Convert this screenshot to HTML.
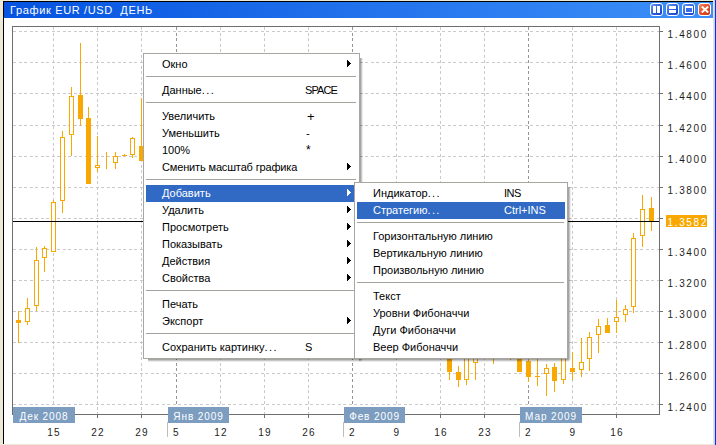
<!DOCTYPE html>
<html><head><meta charset="utf-8"><style>
*{margin:0;padding:0;box-sizing:border-box}
html,body{width:716px;height:445px;overflow:hidden;background:#fff}
body{position:relative;font-family:"Liberation Sans",sans-serif}
.abs{position:absolute}
.pl{position:absolute;left:667.5px;font-size:10px;letter-spacing:1.65px;color:#1e1e1e;line-height:11px}
.dl{position:absolute;font-size:10px;letter-spacing:1.3px;color:#1e1e1e;line-height:11px;white-space:pre}
.dl.c{width:40px;text-align:center}
.mb{position:absolute;top:407px;height:16px;background:#7c9dc0;color:#fff;font-size:10px;letter-spacing:0.9px;line-height:20px;text-align:center;white-space:pre}
.menu{position:absolute;background:#fff;border:1px solid #a7a6a0}
.shadow{position:absolute;background:rgba(0,0,0,0.35)}
.sep{position:absolute;height:1px;background:#a4a39e}
.hl{position:absolute;height:17px;background:#316ac5}
.row{position:absolute;font-size:11px;line-height:17px;height:17px;color:#000;white-space:pre}
.row.hi{color:#fff}
.arr{position:absolute;width:0;height:0;border-top:3.8px solid transparent;border-bottom:3.8px solid transparent;border-left:4.6px solid #000}
.btn{position:absolute;top:3px;width:13px;height:13px;border:1px solid #fff;border-radius:3px;background:linear-gradient(135deg,#6d9bf7 0%,#2f62e0 50%,#1440c8 100%)}
</style></head><body>
<div class="abs" style="left:0;top:0;width:716px;height:445px;background:#ece9d8"></div>
<div class="abs" style="left:3px;top:1px;width:710px;height:443px;background:#000"></div>
<div class="abs" style="left:4px;top:2px;width:709px;height:442px;background:#fff"></div>
<div class="abs" style="left:4px;top:2px;width:709px;height:16px;background:linear-gradient(90deg,#0553e0 0%,#3d90f8 100%)"></div>
<div class="abs" style="left:713px;top:0;width:1px;height:445px;background:#e6e3d3"></div>
<div class="abs" style="left:714px;top:0;width:1px;height:445px;background:#c8d0f8"></div>
<div class="abs" style="left:715px;top:0;width:1px;height:445px;background:#0c2ef0"></div>
<div class="abs" style="left:10px;top:2px;font-size:11px;line-height:16px;letter-spacing:0.65px;color:#fff;white-space:pre">График EUR /USD  ДЕНЬ</div>
<div class="btn" style="left:650px"><div class="abs" style="left:2px;top:2px;width:3px;height:7px;background:#fff"></div><div class="abs" style="left:6px;top:2px;width:3px;height:7px;background:#fff"></div></div>
<div class="btn" style="left:666px"><div class="abs" style="left:2px;top:2px;width:7px;height:3px;background:#fff"></div><div class="abs" style="left:2px;top:6px;width:7px;height:3px;background:#fff"></div></div>
<div class="btn" style="left:682px"><div class="abs" style="left:2px;top:2px;width:8px;height:7px;border:1px solid #fff;border-top-width:2px;background:#3a6ee8"></div></div>
<div class="btn" style="left:698px;background:linear-gradient(135deg,#f08a5c 0%,#e2502a 50%,#c83a12 100%)"><svg class="abs" style="left:2px;top:2px" width="8" height="7" viewBox="0 0 8 7"><path d="M0.8 0.5L7.2 6.5M7.2 0.5L0.8 6.5" stroke="#fff" stroke-width="1.9"/></svg></div>
<svg class="abs" style="left:0;top:0" width="716" height="445" viewBox="0 0 716 445" shape-rendering="crispEdges">
<line x1="13" y1="31.5" x2="659" y2="31.5" stroke="#cacaca" stroke-dasharray="3.4 2.1"/>
<line x1="659" y1="31.5" x2="663" y2="31.5" stroke="#707070"/>
<line x1="13" y1="62.5" x2="659" y2="62.5" stroke="#cacaca" stroke-dasharray="3.4 2.1"/>
<line x1="659" y1="62.5" x2="663" y2="62.5" stroke="#707070"/>
<line x1="13" y1="93.5" x2="659" y2="93.5" stroke="#cacaca" stroke-dasharray="3.4 2.1"/>
<line x1="659" y1="93.5" x2="663" y2="93.5" stroke="#707070"/>
<line x1="13" y1="125.5" x2="659" y2="125.5" stroke="#cacaca" stroke-dasharray="3.4 2.1"/>
<line x1="659" y1="125.5" x2="663" y2="125.5" stroke="#707070"/>
<line x1="13" y1="156.5" x2="659" y2="156.5" stroke="#cacaca" stroke-dasharray="3.4 2.1"/>
<line x1="659" y1="156.5" x2="663" y2="156.5" stroke="#707070"/>
<line x1="13" y1="187.5" x2="659" y2="187.5" stroke="#cacaca" stroke-dasharray="3.4 2.1"/>
<line x1="659" y1="187.5" x2="663" y2="187.5" stroke="#707070"/>
<line x1="13" y1="218.5" x2="659" y2="218.5" stroke="#cacaca" stroke-dasharray="3.4 2.1"/>
<line x1="659" y1="218.5" x2="663" y2="218.5" stroke="#707070"/>
<line x1="13" y1="249.5" x2="659" y2="249.5" stroke="#cacaca" stroke-dasharray="3.4 2.1"/>
<line x1="659" y1="249.5" x2="663" y2="249.5" stroke="#707070"/>
<line x1="13" y1="280.5" x2="659" y2="280.5" stroke="#cacaca" stroke-dasharray="3.4 2.1"/>
<line x1="659" y1="280.5" x2="663" y2="280.5" stroke="#707070"/>
<line x1="13" y1="311.5" x2="659" y2="311.5" stroke="#cacaca" stroke-dasharray="3.4 2.1"/>
<line x1="659" y1="311.5" x2="663" y2="311.5" stroke="#707070"/>
<line x1="13" y1="342.5" x2="659" y2="342.5" stroke="#cacaca" stroke-dasharray="3.4 2.1"/>
<line x1="659" y1="342.5" x2="663" y2="342.5" stroke="#707070"/>
<line x1="13" y1="373.5" x2="659" y2="373.5" stroke="#cacaca" stroke-dasharray="3.4 2.1"/>
<line x1="659" y1="373.5" x2="663" y2="373.5" stroke="#707070"/>
<line x1="13" y1="404.5" x2="659" y2="404.5" stroke="#cacaca" stroke-dasharray="3.4 2.1"/>
<line x1="659" y1="404.5" x2="663" y2="404.5" stroke="#707070"/>
<line x1="53.5" y1="27" x2="53.5" y2="414" stroke="#cacaca" stroke-dasharray="3.4 2.1"/>
<line x1="53.5" y1="414" x2="53.5" y2="418" stroke="#707070"/>
<line x1="97.5" y1="27" x2="97.5" y2="414" stroke="#cacaca" stroke-dasharray="3.4 2.1"/>
<line x1="97.5" y1="414" x2="97.5" y2="418" stroke="#707070"/>
<line x1="141.5" y1="27" x2="141.5" y2="414" stroke="#cacaca" stroke-dasharray="3.4 2.1"/>
<line x1="141.5" y1="414" x2="141.5" y2="418" stroke="#707070"/>
<line x1="176.5" y1="27" x2="176.5" y2="414" stroke="#959595" stroke-dasharray="3.4 2.1"/>
<line x1="176.5" y1="414" x2="176.5" y2="418" stroke="#707070"/>
<line x1="220.5" y1="27" x2="220.5" y2="414" stroke="#cacaca" stroke-dasharray="3.4 2.1"/>
<line x1="220.5" y1="414" x2="220.5" y2="418" stroke="#707070"/>
<line x1="264.5" y1="27" x2="264.5" y2="414" stroke="#cacaca" stroke-dasharray="3.4 2.1"/>
<line x1="264.5" y1="414" x2="264.5" y2="418" stroke="#707070"/>
<line x1="308.5" y1="27" x2="308.5" y2="414" stroke="#cacaca" stroke-dasharray="3.4 2.1"/>
<line x1="308.5" y1="414" x2="308.5" y2="418" stroke="#707070"/>
<line x1="352.5" y1="27" x2="352.5" y2="414" stroke="#959595" stroke-dasharray="3.4 2.1"/>
<line x1="352.5" y1="414" x2="352.5" y2="418" stroke="#707070"/>
<line x1="396.5" y1="27" x2="396.5" y2="414" stroke="#cacaca" stroke-dasharray="3.4 2.1"/>
<line x1="396.5" y1="414" x2="396.5" y2="418" stroke="#707070"/>
<line x1="440.5" y1="27" x2="440.5" y2="414" stroke="#cacaca" stroke-dasharray="3.4 2.1"/>
<line x1="440.5" y1="414" x2="440.5" y2="418" stroke="#707070"/>
<line x1="484.5" y1="27" x2="484.5" y2="414" stroke="#cacaca" stroke-dasharray="3.4 2.1"/>
<line x1="484.5" y1="414" x2="484.5" y2="418" stroke="#707070"/>
<line x1="528.5" y1="27" x2="528.5" y2="414" stroke="#959595" stroke-dasharray="3.4 2.1"/>
<line x1="528.5" y1="414" x2="528.5" y2="418" stroke="#707070"/>
<line x1="572.5" y1="27" x2="572.5" y2="414" stroke="#cacaca" stroke-dasharray="3.4 2.1"/>
<line x1="572.5" y1="414" x2="572.5" y2="418" stroke="#707070"/>
<line x1="616.5" y1="27" x2="616.5" y2="414" stroke="#cacaca" stroke-dasharray="3.4 2.1"/>
<line x1="616.5" y1="414" x2="616.5" y2="418" stroke="#707070"/>
<rect x="18" y="311" width="1" height="32" fill="#f8a800"/>
<rect x="16" y="320" width="5" height="3" fill="#f8a800"/>
<rect x="27" y="298" width="1" height="27" fill="#f8a800"/>
<rect x="25.5" y="308.5" width="4" height="13" fill="#fff" stroke="#f8a800"/>
<rect x="36" y="247" width="1" height="64" fill="#f8a800"/>
<rect x="34.5" y="260.5" width="4" height="45" fill="#fff" stroke="#f8a800"/>
<rect x="44" y="246" width="1" height="26" fill="#f8a800"/>
<rect x="42.5" y="248.5" width="4" height="9" fill="#fff" stroke="#f8a800"/>
<rect x="53" y="200" width="1" height="52" fill="#f8a800"/>
<rect x="51.5" y="202.5" width="4" height="49" fill="#fff" stroke="#f8a800"/>
<rect x="62" y="131" width="1" height="82" fill="#f8a800"/>
<rect x="60.5" y="137.5" width="4" height="63" fill="#fff" stroke="#f8a800"/>
<rect x="71" y="87" width="1" height="69" fill="#f8a800"/>
<rect x="69.5" y="96.5" width="4" height="38" fill="#fff" stroke="#f8a800"/>
<rect x="80" y="43" width="1" height="83" fill="#f8a800"/>
<rect x="78" y="95" width="5" height="24" fill="#f8a800"/>
<rect x="88" y="107" width="1" height="77" fill="#f8a800"/>
<rect x="86" y="118" width="5" height="66" fill="#f8a800"/>
<rect x="97" y="136" width="1" height="36" fill="#f8a800"/>
<rect x="95.5" y="165.5" width="4" height="2" fill="#fff" stroke="#f8a800"/>
<rect x="106" y="152" width="1" height="17" fill="#f8a800"/>
<rect x="115" y="152" width="1" height="17" fill="#f8a800"/>
<rect x="113.5" y="156.5" width="4" height="6" fill="#fff" stroke="#f8a800"/>
<rect x="124" y="154" width="1" height="2" fill="#f8a800"/>
<rect x="122" y="155" width="5" height="1" fill="#f8a800"/>
<rect x="132" y="137" width="1" height="21" fill="#f8a800"/>
<rect x="130.5" y="138.5" width="4" height="16" fill="#fff" stroke="#f8a800"/>
<rect x="141" y="98" width="1" height="63" fill="#f8a800"/>
<rect x="139" y="146" width="5" height="15" fill="#f8a800"/>
<rect x="449" y="340" width="1" height="40" fill="#f8a800"/>
<rect x="447" y="345" width="5" height="27" fill="#f8a800"/>
<rect x="458" y="366" width="1" height="21" fill="#f8a800"/>
<rect x="456" y="372" width="5" height="8" fill="#f8a800"/>
<rect x="466" y="340" width="1" height="45" fill="#f8a800"/>
<rect x="464.5" y="345.5" width="4" height="34" fill="#fff" stroke="#f8a800"/>
<rect x="475" y="340" width="1" height="40" fill="#f8a800"/>
<rect x="473.5" y="345.5" width="4" height="17" fill="#fff" stroke="#f8a800"/>
<rect x="493" y="340" width="1" height="24" fill="#f8a800"/>
<rect x="491" y="345" width="5" height="5" fill="#f8a800"/>
<rect x="510" y="340" width="1" height="20" fill="#f8a800"/>
<rect x="508" y="345" width="5" height="5" fill="#f8a800"/>
<rect x="519" y="340" width="1" height="32" fill="#f8a800"/>
<rect x="517" y="345" width="5" height="27" fill="#f8a800"/>
<rect x="528" y="355" width="1" height="27" fill="#f8a800"/>
<rect x="526" y="361" width="5" height="16" fill="#f8a800"/>
<rect x="537" y="340" width="1" height="46" fill="#f8a800"/>
<rect x="535" y="376" width="5" height="1" fill="#f8a800"/>
<rect x="546" y="364" width="1" height="32" fill="#f8a800"/>
<rect x="544.5" y="368.5" width="4" height="5" fill="#fff" stroke="#f8a800"/>
<rect x="554" y="363" width="1" height="29" fill="#f8a800"/>
<rect x="552" y="367" width="5" height="14" fill="#f8a800"/>
<rect x="563" y="340" width="1" height="44" fill="#f8a800"/>
<rect x="561.5" y="345.5" width="4" height="34" fill="#fff" stroke="#f8a800"/>
<rect x="572" y="352" width="1" height="28" fill="#f8a800"/>
<rect x="570" y="368" width="5" height="4" fill="#f8a800"/>
<rect x="581" y="338" width="1" height="39" fill="#f8a800"/>
<rect x="579.5" y="362.5" width="4" height="7" fill="#fff" stroke="#f8a800"/>
<rect x="589" y="332" width="1" height="39" fill="#f8a800"/>
<rect x="587.5" y="337.5" width="4" height="21" fill="#fff" stroke="#f8a800"/>
<rect x="598" y="319" width="1" height="34" fill="#f8a800"/>
<rect x="596.5" y="326.5" width="4" height="8" fill="#fff" stroke="#f8a800"/>
<rect x="607" y="318" width="1" height="15" fill="#f8a800"/>
<rect x="605" y="325" width="5" height="8" fill="#f8a800"/>
<rect x="616" y="300" width="1" height="33" fill="#f8a800"/>
<rect x="614.5" y="317.5" width="4" height="4" fill="#fff" stroke="#f8a800"/>
<rect x="625" y="305" width="1" height="17" fill="#f8a800"/>
<rect x="623.5" y="309.5" width="4" height="5" fill="#fff" stroke="#f8a800"/>
<rect x="633" y="233" width="1" height="80" fill="#f8a800"/>
<rect x="631.5" y="238.5" width="4" height="68" fill="#fff" stroke="#f8a800"/>
<rect x="642" y="195" width="1" height="52" fill="#f8a800"/>
<rect x="640.5" y="209.5" width="4" height="26" fill="#fff" stroke="#f8a800"/>
<rect x="651" y="197" width="1" height="34" fill="#f8a800"/>
<rect x="649" y="208" width="5" height="13" fill="#f8a800"/>
<rect x="13" y="221" width="646" height="1" fill="#000"/>
<rect x="12.5" y="26.5" width="647" height="388" fill="none" stroke="#6e6e6e"/>
</svg>
<div class="pl" style="top:29px">1.4800</div>
<div class="pl" style="top:60px">1.4600</div>
<div class="pl" style="top:91px">1.4400</div>
<div class="pl" style="top:123px">1.4200</div>
<div class="pl" style="top:154px">1.4000</div>
<div class="pl" style="top:185px">1.3800</div>
<div class="pl" style="top:247px">1.3400</div>
<div class="pl" style="top:278px">1.3200</div>
<div class="pl" style="top:309px">1.3000</div>
<div class="pl" style="top:340px">1.2800</div>
<div class="pl" style="top:371px">1.2600</div>
<div class="pl" style="top:402px">1.2400</div>

<div class="abs" style="left:666px;top:215px;width:41px;height:12px;background:#f8a800"></div>
<div class="pl" style="top:217px;color:#fff">1.3582</div>
<div class="mb" style="left:13px;width:62px">Дек 2008</div>
<div class="mb" style="left:168px;width:61px">Янв 2009</div>
<div style="position:absolute;left:167px;top:422px;width:1px;height:15px;background:#bdbdbd"></div>
<div class="mb" style="left:344px;width:61px">Фев 2009</div>
<div style="position:absolute;left:343px;top:422px;width:1px;height:15px;background:#bdbdbd"></div>
<div class="mb" style="left:520px;width:62px">Мар 2009</div>
<div style="position:absolute;left:519px;top:422px;width:1px;height:15px;background:#bdbdbd"></div>

<div class="dl c" style="left:34px;top:427px">15</div>
<div class="dl c" style="left:78px;top:427px">22</div>
<div class="dl c" style="left:122px;top:427px">29</div>
<div class="dl" style="left:173px;top:427px">5</div>
<div class="dl c" style="left:201px;top:427px">12</div>
<div class="dl c" style="left:245px;top:427px">19</div>
<div class="dl c" style="left:289px;top:427px">26</div>
<div class="dl" style="left:349px;top:427px">2</div>
<div class="dl c" style="left:377px;top:427px">9</div>
<div class="dl c" style="left:421px;top:427px">16</div>
<div class="dl c" style="left:465px;top:427px">23</div>
<div class="dl" style="left:525px;top:427px">2</div>
<div class="dl c" style="left:553px;top:427px">9</div>
<div class="dl c" style="left:597px;top:427px">16</div>

<!-- main menu -->
<div class="abs" style="left:148px;top:359px;width:212px;height:3px;background:linear-gradient(180deg,rgba(0,0,0,.42),rgba(0,0,0,.22) 50%,rgba(0,0,0,0))"></div>
<div class="abs" style="left:360px;top:58px;width:3px;height:301px;background:linear-gradient(90deg,rgba(0,0,0,.42),rgba(0,0,0,.22) 50%,rgba(0,0,0,0))"></div>
<div class="abs" style="left:360px;top:359px;width:3px;height:3px;background:radial-gradient(circle at 0 0,rgba(0,0,0,.4),rgba(0,0,0,0) 3px)"></div>
<div class="menu" style="left:143px;top:53px;width:217px;height:306px"></div>
<div class="row" style="left:162px;top:56px;">Окно</div>
<svg class="abs" style="left:347px;top:60px" width="5" height="7" shape-rendering="crispEdges"><rect x="0" y="0" width="1" height="7" fill="#000"/><rect x="1" y="1" width="1" height="5" fill="#000"/><rect x="2" y="2" width="1" height="3" fill="#000"/><rect x="3" y="3" width="1" height="1" fill="#000"/></svg>
<div class="sep" style="left:146px;top:76px;width:210px"></div>
<div class="row" style="left:162px;top:82px;">Данные<span style="letter-spacing:1.4px">...</span></div>
<div class="row" style="left:305px;top:82px;letter-spacing:-0.9px;">SPACE</div>
<div class="sep" style="left:146px;top:102px;width:210px"></div>
<div class="row" style="left:162px;top:108px;">Увеличить</div>
<div class="row" style="left:306px;top:108px;font-size:13px;margin-left:1px;">+</div>
<div class="row" style="left:162px;top:125px;">Уменьшить</div>
<div class="row" style="left:306px;top:125px;">-</div>
<div class="row" style="left:162px;top:142px;">100%</div>
<div class="row" style="left:306px;top:142px;font-size:12px;">*</div>
<div class="row" style="left:162px;top:159px;letter-spacing:-0.15px;">Сменить масштаб графика</div>
<svg class="abs" style="left:347px;top:163px" width="5" height="7" shape-rendering="crispEdges"><rect x="0" y="0" width="1" height="7" fill="#000"/><rect x="1" y="1" width="1" height="5" fill="#000"/><rect x="2" y="2" width="1" height="3" fill="#000"/><rect x="3" y="3" width="1" height="1" fill="#000"/></svg>
<div class="sep" style="left:146px;top:179px;width:210px"></div>
<div class="hl" style="left:146px;top:185px;width:211px"></div>
<div class="row hi" style="left:162px;top:185px;">Добавить</div>
<svg class="abs" style="left:347px;top:189px" width="5" height="7" shape-rendering="crispEdges"><rect x="0" y="0" width="1" height="7" fill="#fff"/><rect x="1" y="1" width="1" height="5" fill="#fff"/><rect x="2" y="2" width="1" height="3" fill="#fff"/><rect x="3" y="3" width="1" height="1" fill="#fff"/></svg>
<div class="row" style="left:162px;top:202px;">Удалить</div>
<svg class="abs" style="left:347px;top:206px" width="5" height="7" shape-rendering="crispEdges"><rect x="0" y="0" width="1" height="7" fill="#000"/><rect x="1" y="1" width="1" height="5" fill="#000"/><rect x="2" y="2" width="1" height="3" fill="#000"/><rect x="3" y="3" width="1" height="1" fill="#000"/></svg>
<div class="row" style="left:162px;top:219px;">Просмотреть</div>
<svg class="abs" style="left:347px;top:223px" width="5" height="7" shape-rendering="crispEdges"><rect x="0" y="0" width="1" height="7" fill="#000"/><rect x="1" y="1" width="1" height="5" fill="#000"/><rect x="2" y="2" width="1" height="3" fill="#000"/><rect x="3" y="3" width="1" height="1" fill="#000"/></svg>
<div class="row" style="left:162px;top:236px;">Показывать</div>
<svg class="abs" style="left:347px;top:240px" width="5" height="7" shape-rendering="crispEdges"><rect x="0" y="0" width="1" height="7" fill="#000"/><rect x="1" y="1" width="1" height="5" fill="#000"/><rect x="2" y="2" width="1" height="3" fill="#000"/><rect x="3" y="3" width="1" height="1" fill="#000"/></svg>
<div class="row" style="left:162px;top:253px;">Действия</div>
<svg class="abs" style="left:347px;top:257px" width="5" height="7" shape-rendering="crispEdges"><rect x="0" y="0" width="1" height="7" fill="#000"/><rect x="1" y="1" width="1" height="5" fill="#000"/><rect x="2" y="2" width="1" height="3" fill="#000"/><rect x="3" y="3" width="1" height="1" fill="#000"/></svg>
<div class="row" style="left:162px;top:270px;">Свойства</div>
<svg class="abs" style="left:347px;top:274px" width="5" height="7" shape-rendering="crispEdges"><rect x="0" y="0" width="1" height="7" fill="#000"/><rect x="1" y="1" width="1" height="5" fill="#000"/><rect x="2" y="2" width="1" height="3" fill="#000"/><rect x="3" y="3" width="1" height="1" fill="#000"/></svg>
<div class="sep" style="left:146px;top:290px;width:210px"></div>
<div class="row" style="left:162px;top:296px;">Печать</div>
<div class="row" style="left:162px;top:313px;">Экспорт</div>
<svg class="abs" style="left:347px;top:317px" width="5" height="7" shape-rendering="crispEdges"><rect x="0" y="0" width="1" height="7" fill="#000"/><rect x="1" y="1" width="1" height="5" fill="#000"/><rect x="2" y="2" width="1" height="3" fill="#000"/><rect x="3" y="3" width="1" height="1" fill="#000"/></svg>
<div class="sep" style="left:146px;top:333px;width:210px"></div>
<div class="row" style="left:162px;top:339px;">Сохранить картинку<span style="letter-spacing:1.4px">...</span></div>
<div class="row" style="left:305px;top:339px;">S</div>

<!-- submenu -->
<div class="abs" style="left:359px;top:359px;width:209px;height:3px;background:linear-gradient(180deg,rgba(0,0,0,.42),rgba(0,0,0,.22) 50%,rgba(0,0,0,0))"></div>
<div class="abs" style="left:568px;top:187px;width:3px;height:172px;background:linear-gradient(90deg,rgba(0,0,0,.42),rgba(0,0,0,.22) 50%,rgba(0,0,0,0))"></div>
<div class="abs" style="left:568px;top:359px;width:3px;height:3px;background:radial-gradient(circle at 0 0,rgba(0,0,0,.4),rgba(0,0,0,0) 3px)"></div>
<div class="menu" style="left:354px;top:182px;width:214px;height:177px"></div>
<div class="row" style="left:373px;top:185px;">Индикатор<span style="letter-spacing:1.4px">...</span></div>
<div class="row" style="left:504px;top:185px;letter-spacing:-0.5px;">INS</div>
<div class="hl" style="left:357px;top:202px;width:208px"></div>
<div class="row hi" style="left:373px;top:202px;">Стратегию<span style="letter-spacing:1.4px">...</span></div>
<div class="row hi" style="left:504px;top:202px;">Ctrl+INS</div>
<div class="sep" style="left:357px;top:222px;width:207px"></div>
<div class="row" style="left:373px;top:228px;">Горизонтальную линию</div>
<div class="row" style="left:373px;top:245px;">Вертикальную линию</div>
<div class="row" style="left:373px;top:262px;">Произвольную линию</div>
<div class="sep" style="left:357px;top:282px;width:207px"></div>
<div class="row" style="left:373px;top:288px;">Текст</div>
<div class="row" style="left:373px;top:305px;">Уровни Фибоначчи</div>
<div class="row" style="left:373px;top:322px;">Дуги Фибоначчи</div>
<div class="row" style="left:373px;top:339px;">Веер Фибоначчи</div>

</body></html>
